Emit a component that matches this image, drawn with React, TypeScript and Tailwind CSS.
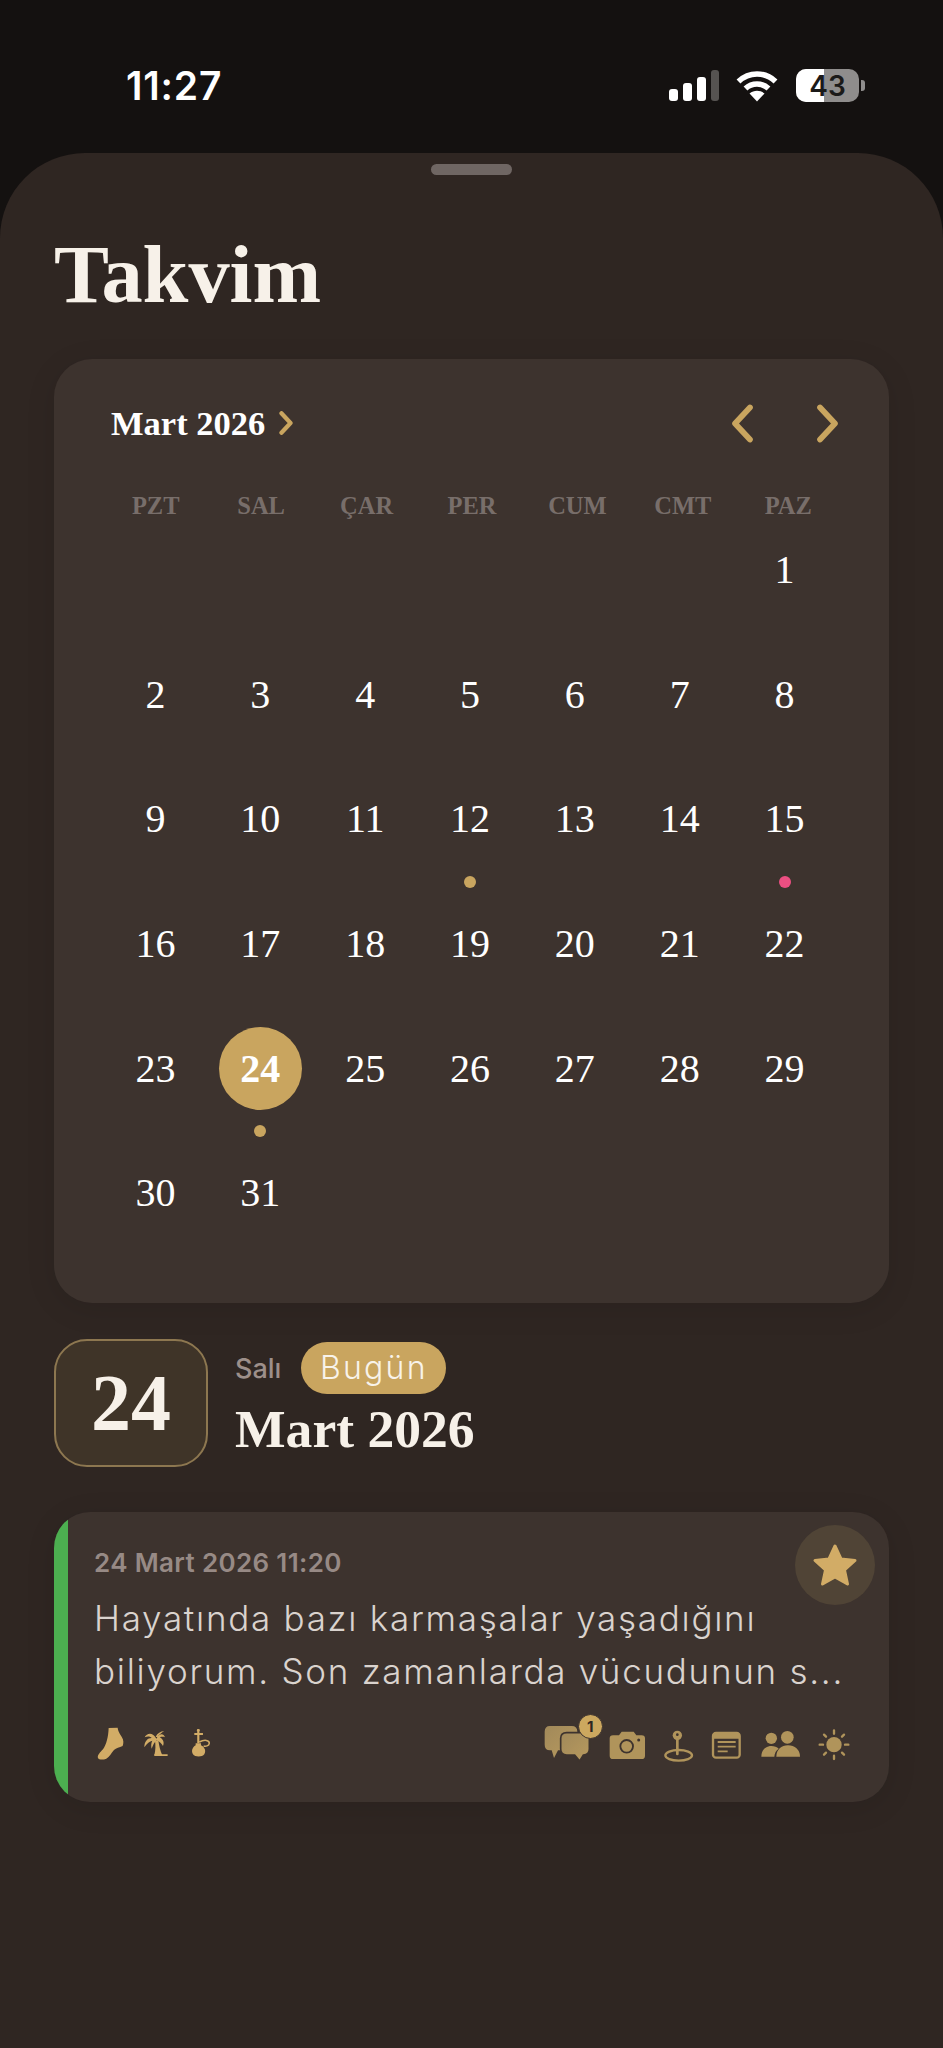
import React from "react";

const SERIF = "font-['Liberation_Serif',serif]";
const SANS = "font-['Inter',sans-serif]";

const WEEK = ["PZT", "SAL", "ÇAR", "PER", "CUM", "CMT", "PAZ"];
const DAYS: (number | null)[] = [null, null, null, null, null, null, ...Array.from({ length: 31 }, (_, i) => i + 1)];
const GOLD_DOTS = [12, 24];
const PINK_DOTS = [15];

function Chevron({ dir, className, sw }: { dir: "l" | "r"; className: string; sw: number }) {
  return (
    <svg viewBox="0 0 20 34" className={className} fill="none" stroke="#c9a55f" strokeWidth={sw} strokeLinecap="round" strokeLinejoin="round">
      {dir === "r" ? <path d="M3.5 3 L16.5 17 L3.5 31" /> : <path d="M16.5 3 L3.5 17 L16.5 31" />}
    </svg>
  );
}

function StatusBar() {
  return (
    <div className="h-[153px] flex items-start justify-between pl-[126px] pr-[78px] pt-[63px]">
      <span className={`${SANS} text-[39px] leading-[46px] font-semibold text-white tracking-[0.8px]`}>11:27</span>
      <div className="flex items-center mt-[6px]">
        <div className="flex items-end gap-[5.5px] h-[31px]">
          <div className="w-[8.5px] h-[12px] rounded-[3px] bg-white" />
          <div className="w-[8.5px] h-[18px] rounded-[3px] bg-white" />
          <div className="w-[8.5px] h-[24px] rounded-[3px] bg-white" />
          <div className="w-[8px] h-[31px] rounded-[3px] bg-[#565351]" />
        </div>
        <svg viewBox="0 0 42 32" className="w-[42px] h-[32px] ml-[17px]" fill="none" stroke="#fff" strokeWidth="5.6">
          <path d="M2.5 11.5 C13 1.5 29 1.5 39.5 11.5" />
          <path d="M9.5 18.5 C16 12.5 26 12.5 32.5 18.5" />
          <path d="M21 31.5 L13.5 23.5 C18 19.8 24 19.8 28.5 23.5 Z" fill="#fff" stroke="none" />
        </svg>
        <div className="relative ml-[18px] w-[63px] h-[33px] rounded-[10px] overflow-hidden bg-[#8f8d8c] flex items-center justify-center">
          <div className="absolute left-0 top-0 bottom-0 w-[28px] bg-white" />
          <span className={`${SANS} relative text-[28px] leading-none font-semibold text-[#1b1a19]`}>43</span>
        </div>
        <div className="w-[4px] h-[11px] ml-[2px] rounded-r-[3px] bg-[#8f8d8c]" />
      </div>
    </div>
  );
}

function DayCell({ day }: { day: number | null }) {
  const today = day === 24;
  return (
    <div className="relative h-[124.6px] flex items-center justify-center">
      {today && <div className="absolute w-[83px] h-[83px] rounded-full bg-[#c9a55f]" />}
      {day !== null && (
        <span className={`${SERIF} relative text-[40px] leading-none text-white ${today ? "font-bold" : ""}`}>{day}</span>
      )}
      {day !== null && GOLD_DOTS.includes(day) && (
        <div className="absolute left-1/2 -translate-x-1/2 bottom-[-6px] w-[12px] h-[12px] rounded-full bg-[#c9a55f]" />
      )}
      {day !== null && PINK_DOTS.includes(day) && (
        <div className="absolute left-1/2 -translate-x-1/2 bottom-[-6px] w-[12px] h-[12px] rounded-full bg-[#ec4f82]" />
      )}
    </div>
  );
}

function CalendarCard() {
  return (
    <section className="mx-[54px] h-[944px] rounded-[38px] bg-[#3d332e] shadow-[0_6px_30px_rgba(0,0,0,0.10)] pl-[49px] pr-[52px]">
      <div className="h-[128px] flex items-center justify-between pl-[8px] pr-[0px]">
        <div className="flex items-center">
          <span className={`${SERIF} text-[34.5px] leading-none font-bold text-white`}>Mart 2026</span>
          <Chevron dir="r" sw={6} className="w-[14px] h-[24px] ml-[14px]" />
        </div>
        <div className="flex items-center gap-[62px] mr-[-2px]">
          <Chevron dir="l" sw={5} className="w-[23px] h-[39px]" />
          <Chevron dir="r" sw={5} className="w-[23px] h-[39px]" />
        </div>
      </div>
      <div className="grid grid-cols-7 h-[38px] items-center mr-[-4px]">
        {WEEK.map((w) => (
          <div key={w} className={`${SERIF} text-center text-[24.5px] leading-none font-bold text-[#786e6a]`}>
            {w}
          </div>
        ))}
      </div>
      <div className="grid grid-cols-7 mt-[-17px]">
        {DAYS.map((d, i) => (
          i < 6 ? <div key={`e${i}`} className="h-[0px]" /> : <DayCell key={i} day={d} />
        ))}
      </div>
    </section>
  );
}

function DateHeader() {
  return (
    <section className="mx-[54px] mt-[36px] flex items-start">
      <div className="w-[154px] h-[128px] rounded-[33px] border-2 border-[#8d7750] bg-[#3f3428] flex items-center justify-center shrink-0">
        <span className={`${SERIF} text-[80px] leading-none font-bold text-[#f7f1e9]`}>24</span>
      </div>
      <div className="ml-[27px] pt-[3px]">
        <div className="flex items-center h-[52px]">
          <span className={`${SANS} text-[27px] leading-none font-medium text-[#9d8f8a]`}>Salı</span>
          <span className={`${SANS} ml-[20px] w-[145px] h-[52px] rounded-full bg-[#c9a55f] flex items-center justify-center text-[32px] leading-none font-light tracking-[2.2px] text-[#f8f3ea]`}>
            Bugün
          </span>
        </div>
        <div className={`${SERIF} text-[53.6px] leading-[60px] mt-[5px] font-bold text-[#f7f1e9]`}>Mart 2026</div>
      </div>
    </section>
  );
}

const MUTED = "#b0945b";

function LeftIcons() {
  return (
    <div className="flex items-center ml-[3px]">
      <svg viewBox="50 55 82 100" className="w-[27.3px] h-[33.3px]" fill="#d2ac66">
        <path d="M85 58 L112 57 C113 66 117 74 124 84 C131 94 130 104 127 112 C117 116 108 118 101 124 C92 134 88 145 78 150 C68 154 56 154 53 148 C50 140 60 131 68 122 C78 108 84 85 85 58 Z" />
      </svg>
      <svg viewBox="188 55 76 100" className="w-[25.3px] h-[33.3px] ml-[19px]" fill="#d2ac66">
        <path d="M222 140 C226 125 226 108 224 96 L234 94 C236 110 240 126 246 140 Z" />
        <path d="M222 137 H262 V142 H222 Z" />
        <path d="M228 90 C218 70 200 72 193 86 C203 82 210 84 214 88 C202 88 192 98 192 116 C200 104 208 98 216 96 C212 104 212 112 214 120 C218 110 222 100 230 94 C238 100 244 104 248 112 C254 100 246 90 238 86 C244 84 250 84 254 86 C250 74 238 72 228 90 Z" />
        <path d="M226 84 C232 74 240 68 252 68 C244 72 236 78 232 86 Z" />
      </svg>
      <svg viewBox="330 55 62 100" className="w-[20.6px] h-[33.3px] ml-[22.5px]" fill="none" stroke="#d2ac66" strokeWidth="5">
        <path d="M340 76 H366" strokeWidth="6" />
        <path d="M352 62 V104" strokeWidth="6.5" />
        <circle cx="352" cy="65" r="4" fill="#d2ac66" stroke="none" />
        <path d="M355 100 C370 92 386 94 385 104 C384 112 374 114 368 112" strokeWidth="4.5" />
        <path d="M344 104 H360 V110 C372 116 376 128 370 137 C364 146 342 146 336 137 C330 128 334 116 344 110 Z" fill="#d2ac66" stroke="none" />
      </svg>
    </div>
  );
}

function RightIcons() {
  return (
    <div className="flex items-center">
      <div className="relative">
        <svg viewBox="42 76 140 114" className="block w-[46.7px] h-[38px]">
          <defs>
            <linearGradient id="cg" x1="0" y1="0" x2="1" y2="1">
              <stop offset="0" stopColor="#a1895a" />
              <stop offset="1" stopColor="#b89a5e" />
            </linearGradient>
          </defs>
          <path d="M60 79 H125 Q142 79 142 96 V135 Q142 152 125 152 H84 L72 175 L65 152 H60 Q44 152 44 135 V96 Q44 79 60 79 Z" fill="url(#cg)" />
          <path d="M110 99 H160 Q178 99 178 116 V148 Q178 166 160 166 H160 L149 184 L134 166 H110 Q92 166 92 148 V116 Q92 99 110 99 Z" fill="url(#cg)" stroke="#3d332e" strokeWidth="5" />
        </svg>
        <div className="absolute left-[34px] top-[-11px] w-[25px] h-[25px] rounded-full bg-[#cca85f] flex items-center justify-center border border-[#3d332e]">
          <span className={`${SANS} text-[15px] leading-none font-bold text-[#2f2622]`}>1</span>
        </div>
      </div>
      <svg viewBox="238 76 110 114" className="w-[36.7px] h-[38px] ml-[18.7px]">
        <path d="M250 107 H268 L276 96 H312 L320 107 H336 Q346 107 346 116 V168 Q346 178 336 178 H250 Q240 178 240 168 V116 Q240 107 250 107 Z" fill={MUTED} />
        <circle cx="291" cy="140" r="19" fill="none" stroke="#3d332e" strokeWidth="5.5" />
        <circle cx="327" cy="121" r="4.5" fill="#3d332e" />
      </svg>
      <svg viewBox="400 76 95 114" className="w-[31.7px] h-[38px] ml-[17.3px]">
        <circle cx="443" cy="107" r="14" fill={MUTED} />
        <circle cx="443" cy="105" r="4" fill="#3d332e" />
        <path d="M443 118 V163" stroke={MUTED} strokeWidth="8" strokeLinecap="round" />
        <ellipse cx="447" cy="167" rx="40" ry="16" fill="none" stroke={MUTED} strokeWidth="7" />
      </svg>
      <svg viewBox="542 76 92 114" className="w-[30.7px] h-[38px] ml-[15.7px]">
        <rect x="548" y="100" width="80" height="74" rx="9" fill="none" stroke={MUTED} strokeWidth="7" />
        <path d="M548 109 Q548 100 557 100 H619 Q628 100 628 109 V117 H548 Z" fill={MUTED} />
        <path d="M562 127 H616 M562 141 H616 M562 155 H592" stroke={MUTED} strokeWidth="5.5" />
      </svg>
      <svg viewBox="690 76 122 114" className="w-[40.7px] h-[38px] ml-[18.7px]">
        <circle cx="724" cy="116" r="17" fill={MUTED} />
        <circle cx="772" cy="113" r="19" fill={MUTED} />
        <path d="M694 171 C694 150 708 139 724 139 C733 139 741 142 746 147 C738 152 734 160 733 171 Z" fill={MUTED} />
        <path d="M739 171 C739 150 754 137 774 137 C794 137 810 150 810 171 Z" fill={MUTED} />
      </svg>
      <svg viewBox="865 76 98 114" className="w-[32.7px] h-[38px] ml-[17.7px]">
        <circle cx="913" cy="135" r="23" fill={MUTED} />
        <g stroke={MUTED} strokeWidth="7" strokeLinecap="round">
          <path d="M913 92 V102 M913 168 V178 M870 135 H880 M946 135 H956 M883 105 L889 111 M937 159 L943 165 M943 105 L937 111 M889 159 L883 165" />
        </g>
      </svg>
    </div>
  );
}

function EntryCard() {
  return (
    <section className="relative mx-[54px] mt-[45px] h-[290px] rounded-[36px] overflow-hidden bg-[#3d332e] shadow-[0_6px_30px_rgba(0,0,0,0.10)] flex">
      <div className="w-[14px] shrink-0 bg-[#4caf50]" />
      <div className="flex-1 pl-[26px] pr-[38px]">
        <div className="absolute right-[14px] top-[13px] w-[80px] h-[80px] rounded-full bg-[#504436] flex items-center justify-center">
          <svg viewBox="0 0 46 44" className="w-[46px] h-[44px]" fill="#d2ac66" stroke="#d2ac66" strokeWidth="3" strokeLinejoin="round">
            <path d="M23 3 L29 16 L43 17.5 L32.5 27 L35.5 41 L23 34 L10.5 41 L13.5 27 L3 17.5 L17 16 Z" />
          </svg>
        </div>
        <div className={`${SANS} pt-[37px] text-[26px] leading-[28px] font-semibold tracking-[0.35px] text-[#978a85]`}>24 Mart 2026 11:20</div>
        <p className={`${SANS} mt-[15px] text-[35px] leading-[53px] font-light tracking-[1.72px] text-[#dad3ce] whitespace-nowrap`}>
          <span className="block">Hayatında bazı karmaşalar yaşadığını</span>
          <span className="block">biliyorum. Son zamanlarda vücudunun s...</span>
        </p>
        <div className="mt-[27px] flex items-center justify-between">
          <LeftIcons />
          <RightIcons />
        </div>
      </div>
    </section>
  );
}

export default function App() {
  return (
    <div className="w-[943px] h-[2048px] bg-[#141110] overflow-hidden flex flex-col">
      <StatusBar />
      <main className="flex-1 rounded-t-[85px] bg-[#2f2622]">
        <div className="mx-auto mt-[11px] w-[81px] h-[11px] rounded-full bg-[#6f6663]" />
        <h1 className={`${SERIF} ml-[54px] mt-[54px] h-[130px] text-[82.4px] leading-[92px] font-bold text-[#f7f1e9]`}>Takvim</h1>
        <CalendarCard />
        <DateHeader />
        <EntryCard />
      </main>
    </div>
  );
}
